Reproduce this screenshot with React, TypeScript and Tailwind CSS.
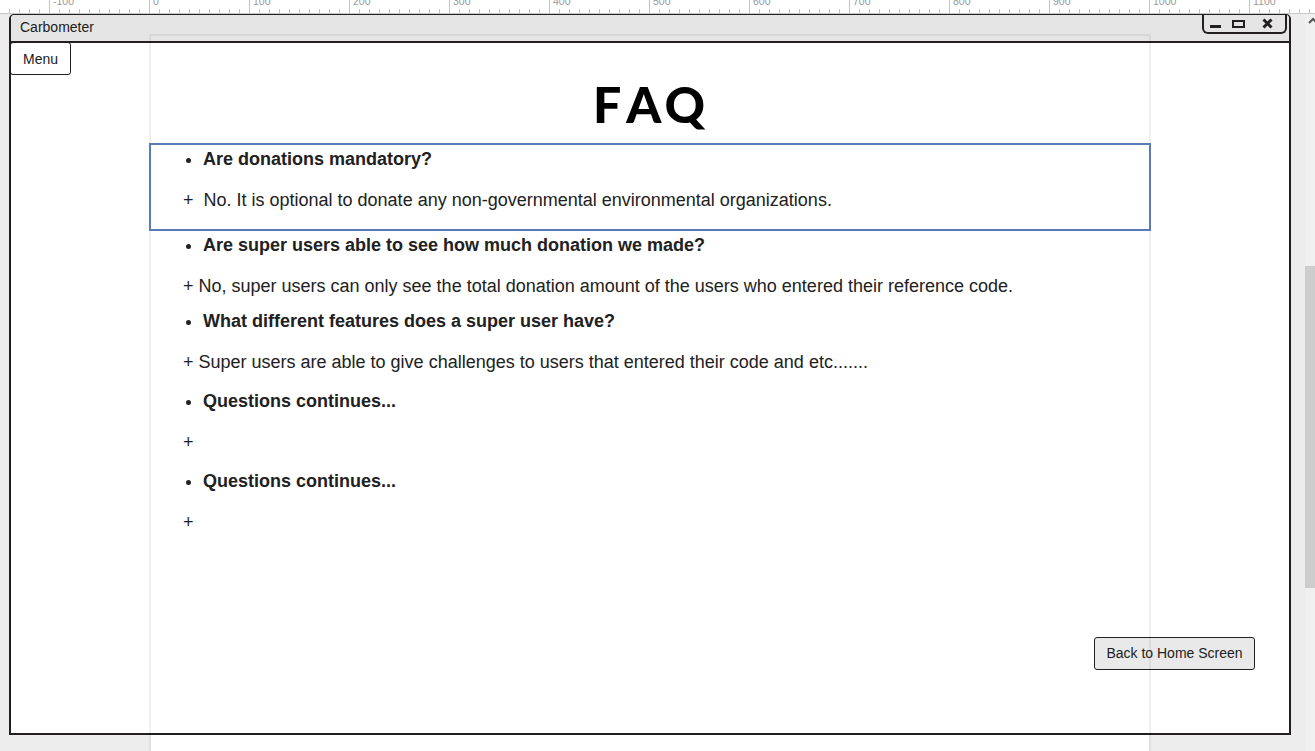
import React from "react";

type Faq = { question: string; answer: string; box: string; gap: string };

const faqs: Faq[] = [
  {
    question: "Are donations mandatory?",
    answer: "No. It is optional to donate any non-governmental environmental organizations.",
    box: "h-[88px] border-2 border-[#5b7bb8]",
    gap: "pl-[5px]",
  },
  {
    question: "Are super users able to see how much donation we made?",
    answer: "No, super users can only see the total donation amount of the users who entered their reference code.",
    box: "h-[76px] border-x-2 border-transparent",
    gap: "",
  },
  {
    question: "What different features does a super user have?",
    answer: "Super users are able to give challenges to users that entered their code and etc.......",
    box: "h-[80px] border-x-2 border-transparent",
    gap: "",
  },
  { question: "Questions continues...", answer: "", box: "h-[80px] border-x-2 border-transparent", gap: "" },
  { question: "Questions continues...", answer: "", box: "h-[80px] border-x-2 border-transparent", gap: "" },
];

const minorTicks = Array.from({ length: 131 }, (_, i) => 9 + i * 10);
const majorLabels = Array.from({ length: 13 }, (_, i) => (i - 1) * 100);

function Ruler() {
  return (
    <svg className="block h-[14px] w-full shrink-0 bg-white" viewBox="0 0 1315 14" shapeRendering="crispEdges">
      <rect x="0" y="13" width="1315" height="1" fill="#c8c8c8" />
      {minorTicks.map((x) => (
        <rect key={x} x={x} y="9" width="1" height="4" fill="#c4c4c4" />
      ))}
      {majorLabels.map((n) => (
        <g key={n}>
          <rect x={149 + n} y="0" width="1" height="13" fill="#c4c4c4" />
          <text x={153 + n} y="5" fontSize="10.5" fill="#999999" fontFamily="Liberation Sans, sans-serif">
            {n}
          </text>
        </g>
      ))}
    </svg>
  );
}

function WindowControls() {
  return (
    <div className="-mt-px mr-[2px] h-[20px] w-[85px] rounded-b-[6px] border-2 border-t-0 border-[#231f20]">
      <svg className="block h-[18px] w-[81px]" viewBox="0 0 81 18" fill="none" stroke="#231f20">
        <path d="M6 12.5H17" strokeWidth="3" />
        <rect x="29" y="7" width="11" height="6" strokeWidth="2" />
        <path d="M59.5 5.5L67.5 13.5M67.5 5.5L59.5 13.5" strokeWidth="3" />
      </svg>
    </div>
  );
}

function FaqItem({ question, answer, box, gap }: Faq) {
  return (
    <section className={`pl-8 ${box}`}>
      <h2 className="flex h-[28px] items-center font-bold">
        <span className="ml-[3px] mr-[12px] mt-[3px] h-[5px] w-[5px] rounded-full bg-[#222222]" />
        <span>{question}</span>
      </h2>
      <p className="mt-[13px] flex h-[28px] items-center whitespace-pre">
        <span className="w-[15.5px]">+</span>
        <span className={gap}>{answer}</span>
      </p>
    </section>
  );
}

export default function App() {
  return (
    <div className="relative flex h-[751px] w-[1315px] flex-col overflow-hidden bg-[#ededed] font-['Liberation_Sans',Arial,sans-serif] text-[#212121]">
      <Ruler />
      <div className="flex min-h-0 flex-1">
        <main className="ml-[9px] flex h-[721px] w-[1282px] shrink-0 flex-col rounded-t-[5px] border-2 border-t border-[#231f20] bg-white">
          <header className="flex h-[28px] shrink-0 justify-between rounded-t-[4px] border-b-2 border-[#231f20] bg-[#e5e5e5]">
            <span className="pl-[9px] text-sm leading-[25px]">Carbometer</span>
            <WindowControls />
          </header>
          <div className="relative flex min-h-0 flex-1 flex-col">
            <button className="absolute -left-px -top-px h-[33px] w-[61px] rounded-[3px] border border-[#231f20] text-sm">
              Menu
            </button>
            <h1 className="ml-[137px] flex h-[100px] w-[1002px] justify-center pt-[31px] font-[Lato] text-[50px] font-black leading-[60px] text-black">
              <span className="mr-[5px]">F</span>
              <span className="mr-[3px]">A</span>
              <span>Q</span>
            </h1>
            <div className="ml-[138px] w-[1002px] text-lg leading-[28px]">
              {faqs.map((item, i) => (
                <FaqItem key={i} {...item} />
              ))}
            </div>
            <button className="mb-[63px] mr-[34px] mt-auto h-[33px] w-[161px] self-end rounded-[3px] border border-[#231f20] bg-[#e9e9e9] pb-0.5 text-sm">
              Back to Home Screen
            </button>
          </div>
        </main>
        <div className="flex-1" />
        <aside className="flex w-[10px] flex-col bg-[#f0f0f0]">
          <div className="mt-[252px] h-[322px] bg-[#cdcdcd]" />
        </aside>
      </div>
      <div className="pointer-events-none absolute left-[149px] top-[34px] h-[109px] w-[1002px] border-2 border-b-0 border-black/6" />
      <div className="pointer-events-none absolute left-[149px] top-[231px] h-[520px] w-[1002px] border-x-2 border-black/6" />
      <div className="absolute left-[151px] top-[735px] h-4 w-[998px] bg-white" />
      <svg className="absolute left-[1308px] top-[17px] h-2 w-[7px]" viewBox="0 0 7 8" fill="none" stroke="#555" strokeWidth="2">
        <path d="M1 6L5 2L9 6" />
      </svg>
    </div>
  );
}
